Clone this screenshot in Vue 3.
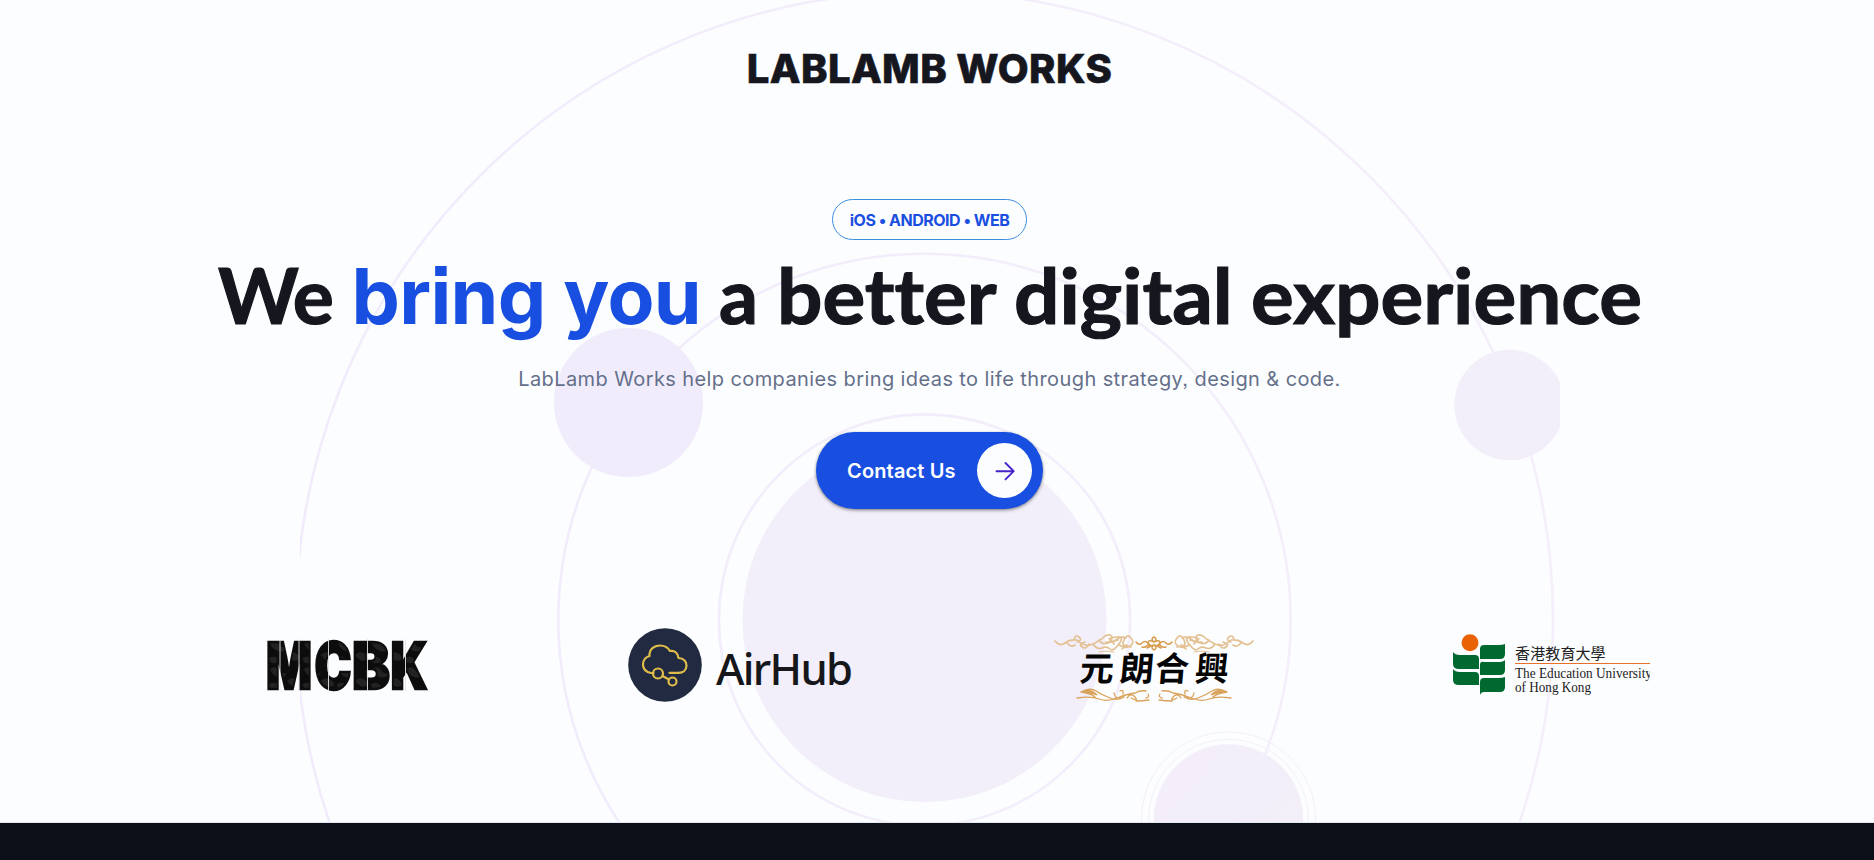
<script setup>
const headline = [
  { text: 'We', cls: 'w-we' },
  { text: 'bring you', cls: 'w-bring' },
  { text: 'a', cls: 'w-a' },
  { text: 'better', cls: 'w-better' },
  { text: 'digital', cls: 'w-digital' },
  { text: 'experience', cls: 'w-exp' },
]
const stencil = [
  { ch: 'M', x: -1, w: 46 },
  { ch: 'C', x: 47.5, w: 37 },
  { ch: 'B', x: 85, w: 38 },
  { ch: 'K', x: 123.5, w: 37 },
]
const hanChars = [
  { ch: '元', x: 26 },
  { ch: '朗', x: 66 },
  { ch: '合', x: 101 },
  { ch: '興', x: 141 },
]
</script>

<template>
  <div class="page">
    <main class="hero">
      <svg class="orbits" width="1260" height="822" viewBox="300 0 1260 822" aria-hidden="true">
        <defs>
          <linearGradient id="tint" x1="0" y1="0" x2="1" y2="1">
            <stop offset="0" stop-color="#f4eef9" />
            <stop offset="0.45" stop-color="#f2eefa" />
            <stop offset="1" stop-color="#f5f0f6" />
          </linearGradient>
          <linearGradient id="line" gradientUnits="userSpaceOnUse" x1="300" y1="0" x2="1560" y2="0">
            <stop offset="0" stop-color="#f1ecfc" />
            <stop offset="1" stop-color="#f4effa" />
          </linearGradient>
        </defs>
        <g fill="none" stroke="url(#line)" stroke-width="2.6">
          <circle cx="924.5" cy="620" r="628.5" />
          <circle cx="924.5" cy="620" r="366.2" />
          <circle cx="924.5" cy="620" r="205.6" />
        </g>
        <circle cx="924.5" cy="620" r="182" fill="#f2eefa" />
        <circle cx="628.5" cy="402.500" r="74.6" fill="#f1ecfc" />
        <circle cx="1509.5" cy="405" r="55.2" fill="#f2eefa" />
        <circle cx="1228.5" cy="819" r="74.7" fill="url(#tint)" />
        <circle cx="1228.5" cy="819" r="79.700" fill="none" stroke="#f4eff9" />
        <circle cx="1228.5" cy="819" r="87" fill="none" stroke="#f4eff9" />
      </svg>

      <header class="brand">LABLAMB WORKS</header>

      <section class="intro">
        <div class="platforms">iOS • ANDROID • WEB</div>
        <h1 class="headline">
          <span v-for="w in headline" :key="w.text" :class="w.cls">{{ w.text }}</span>
        </h1>
        <p class="lead">LabLamb Works help companies bring ideas to life through strategy, design &amp; code.</p>
        <a class="cta">
          <span>Contact Us</span>
          <span class="cta-dot">
            <svg width="24" height="24" viewBox="0 0 24 24" fill="none" stroke="#4522c9" stroke-width="1.9" stroke-linecap="round" stroke-linejoin="round">
              <path d="M3.500 12.200h17M12.500 4l8.200 8.200-8.200 8.200" />
            </svg>
          </span>
        </a>
      </section>

      <section class="clients">
        <svg class="mcbk" width="162" height="52" viewBox="0 0 162 52">
          <defs>
            <pattern id="camo" width="34" height="26" patternUnits="userSpaceOnUse">
              <rect width="34" height="26" fill="#0c0c0c" />
              <path d="M3 4q6-4 9 1t8 3q-3 6-9 4T3 4M20 16q5-5 10-1t2 6q-6 3-12-5M2 19q6-3 9 1t-3 4q-6 1-6-5" fill="#222" />
            </pattern>
          </defs>
          <text
            v-for="s in stencil" :key="s.ch" :x="s.x" y="49.500" :textLength="s.w"
            lengthAdjust="spacingAndGlyphs" class="stencil"
          >{{ s.ch }}</text>
          <path d="M13 0v52M32 0v52M61.500 0v52M100.500 0v52M138.500 0v52" stroke="#e4e4e8" stroke-width="0.9" />
        </svg>

        <div class="airhub">
          <svg width="74" height="74" viewBox="0 0 74 74">
            <circle cx="37" cy="37" r="36.8" fill="#212a40" />
            <g fill="none" stroke="#dfbd4b" stroke-width="2.2" stroke-linecap="round" stroke-linejoin="round">
              <path d="M25.500 45H23C18 44 15 41 15 36.500C15 32 18 29 21.500 28C21 21.500 26 17.500 32 17.500C36.500 17.500 40 19.500 42 23C46.500 22 50 25 50.500 30C55.500 30 58.500 33.500 58.500 37.500C58.500 42 55 44.800 50.500 44.800H41.500" />
              <circle cx="30" cy="45.500" r="5" />
              <circle cx="44.500" cy="53.500" r="4" />
              <path d="M34.500 48l6.500 3.500" />
            </g>
          </svg>
          <span>AirHub</span>
        </div>

        <svg class="hopehing" width="202" height="72" viewBox="0 0 202 72">
          <g fill="none" stroke="#e3c193" stroke-width="1.7" stroke-linecap="round">
            <g id="scroll">
              <path d="M2 8q5 6 10 2t12-3q8 8 16 4t12-8q7-3 7 2t-6 4M21 7q1-6 5-3t-2 5M36 11q-3 6-7 3t3-5M40 11q4 6 9 4t8 1 9-5-3-7-6 3 4 4M46 7q3 5 9 3t10-3M14 10q4 5 8 2" />
              <path d="M66 12q6 4 11 1t1-8-7 2 3 5M60 9q8-7 13-4M69 16q4-4 9-2" />
              <path d="M46 19q7-2 15 0" stroke-width="1" />
            </g>
            <use href="#scroll" transform="translate(202 0) scale(-1 1)" />
          </g>
          <g fill="none" stroke="#d79b4c" stroke-width="1.5" stroke-linecap="round">
            <path d="M83 9q3 4 6 1t6 0 3 3-4 2M119 9q-3 4-6 1t-6 0-3 3 4 2" />
            <path d="M101 4q4 2 0 5q-4-3 0-5M101 9q-6-3-6 1t6 2q6 2 6-2t-6-1M101 12q-4 3 0 5 4-2 0-5M89 14q4 1 6-2M113 14q-4 1-6-2" />
          </g>
          <g fill="none" stroke="#d9a35c" stroke-width="1.3" stroke-linecap="round">
            <g id="vine">
              <path d="M24 65q14-2 22 1t18-1 18-5q5-3 11-2M28 59q9-5 15-1t14 7 14-1M28 59q9 1 14 5M67 58q4-2 3 3M74 65q4-6 8-1t-4 1M93 65q4-1 2-4M61 60q1 6 7 5M83 68q6 0 13-1" />
              <path d="M29 59q9-4 15 3q-7-3-15-3Z" fill="#d9a35c" />
            </g>
            <use href="#vine" transform="translate(202 0) scale(-1 1)" />
          </g>
          <g transform="translate(0 49) skewX(-5) translate(0 -49)">
            <text v-for="c in hanChars" :key="c.ch" :x="c.x" y="48.500" class="brush">{{ c.ch }}</text>
          </g>
        </svg>

        <svg class="eduhk" width="197" height="62" viewBox="0 0 197 62">
          <circle cx="17" cy="8.800" r="8.500" fill="#ea6206" />
          <g fill="#00692f">
            <path d="M0 18q2 3 7 3h15q4 0 4 4v10H6q-6 0-6-5Z" />
            <path d="M0 35q2 3 7 3h15q4 0 4 4v9H6q-6 0-6-5Z" />
            <path d="M52 10v10q0 5-5 5H27V15q0-4 4-4h14q5 0 7-1Z" />
            <path d="M52 26v10q0 5-5 5H27V31q0-4 4-3h14q5 0 7-2Z" />
            <path d="M52 43v10q0 5-5 5H31q-3 0-4 3V48q0-4 4-4h14q5 0 7-1Z" />
          </g>
          <path d="M62 29.500h135" stroke="#e8702a" stroke-width="1.200" />
          <text x="62 77.200 92.300 107.500 122.500 137.500" y="24.500" class="han">香港教育大學</text>
          <text x="62" y="43.500" class="eng" textLength="137" lengthAdjust="spacingAndGlyphs">The Education University</text>
          <text x="62" y="58" class="eng" textLength="76" lengthAdjust="spacingAndGlyphs">of Hong Kong</text>
        </svg>
      </section>
    </main>
    <footer class="footer"></footer>
  </div>
</template>

<style>
body {
  margin: 0;
}
</style>

<style scoped>
.page {
  height: 860px;
  overflow: hidden;
  background: #fcfdff;
  font-family: Inter, sans-serif;
  font-feature-settings: "ss07" 1;
  color: #16161f;
}
.hero {
  position: relative;
  box-sizing: border-box;
  height: 823px;
  padding-right: 15px;
  border-bottom: 1px solid #e4e7ee;
}
.orbits {
  position: absolute;
  left: 300px;
  top: 0;
}
.brand {
  position: relative;
  padding-top: 44px;
  text-align: center;
  font-size: 40px;
  line-height: 49px;
  font-weight: 800;
  letter-spacing: 0.4px;
  -webkit-text-stroke: 0.6px currentColor;
}
.intro {
  position: relative;
  display: flex;
  flex-direction: column;
  align-items: center;
  margin-top: 106px;
}
.platforms {
  box-sizing: border-box;
  width: 195px;
  height: 41px;
  border: 1px solid #3b8fe0;
  border-radius: 21px;
  text-align: center;
  font-size: 16px;
  line-height: 41px;
  font-weight: 700;
  letter-spacing: -0.5px;
  color: #1a4fe0;
  white-space: nowrap;
}
.headline {
  display: flex;
  align-items: baseline;
  align-self: flex-start;
  margin: 7px 0 0 218px;
  height: 95px;
  font-family: Lato, sans-serif;
  font-size: 77px;
  line-height: 95px;
  font-weight: 700;
  font-variant-ligatures: none;
  -webkit-text-stroke: 1.2px currentColor;
  white-space: nowrap;
}
.headline span {
  flex: none;
  transform-origin: left;
}
.w-we {
  width: 133.500px;
  letter-spacing: -1.5px;
}
.headline .w-bring {
  width: 367.500px;
  font-family: Inter, sans-serif;
  font-size: 76.8px;
  font-weight: 700;
  letter-spacing: -0.65px;
  -webkit-text-stroke: 0;
  color: #184fe0;
}
.w-a { width: 58px; }
.w-better {
  width: 236.500px;
  transform: scaleX(1.04);
}
.w-digital {
  width: 237.500px;
  transform: scaleX(1.04);
}
.w-exp { transform: scaleX(1.04); }
.lead {
  margin: 23px 0 0;
  font-size: 20px;
  line-height: 28px;
  letter-spacing: 0.4px;
  color: #64708a;
  white-space: nowrap;
}
.cta {
  display: flex;
  box-sizing: border-box;
  align-items: center;
  justify-content: space-between;
  width: 227px;
  height: 77px;
  margin-top: 39px;
  padding: 0 11px 0 31px;
  border-radius: 39px;
  background: #184fe0;
  box-shadow: 0 1px 3px rgba(0, 0, 0, 0.4), 0 2px 4px rgba(0, 0, 0, 0.12);
  color: #fff;
  font-size: 20px;
  font-weight: 600;
  letter-spacing: 0.15px;
}
.cta-dot {
  display: grid;
  place-items: center;
  width: 55px;
  height: 55px;
  border-radius: 50%;
  background: #fcfdff;
}
.clients {
  position: relative;
  display: flex;
  align-items: flex-start;
  margin: 119px 0 0 267px;
}
.mcbk {
  margin-top: 11px;
  overflow: visible;
}
.stencil {
  font-family: Inter, sans-serif;
  font-size: 65px;
  font-weight: 900;
  fill: url(#camo);
  stroke: #0e0e0e;
  stroke-width: 2.4px;
}
.airhub {
  display: flex;
  align-items: flex-start;
  width: 240px;
  margin-left: 199px;
}
.airhub span {
  margin: 10px 0 0 14px;
  font-family: "Noto Sans", sans-serif;
  font-size: 43.5px;
  line-height: 60px;
  font-weight: 500;
  letter-spacing: -1.7px;
  color: #15171a;
}
.hopehing {
  margin: 5px 0 0 185px;
}
.brush {
  font-family: "Noto Sans CJK TC", sans-serif;
  font-size: 34px;
  font-weight: 700;
  fill: #050505;
}
.eduhk {
  margin: 6px 0 0 198px;
}
.han {
  font-family: "Noto Sans CJK TC", sans-serif;
  font-size: 15px;
  fill: #222;
}
.eng {
  font-family: "Liberation Serif", serif;
  font-size: 14.5px;
  fill: #222;
}
.footer {
  height: 37px;
  background: #0b0f17;
}
</style>
